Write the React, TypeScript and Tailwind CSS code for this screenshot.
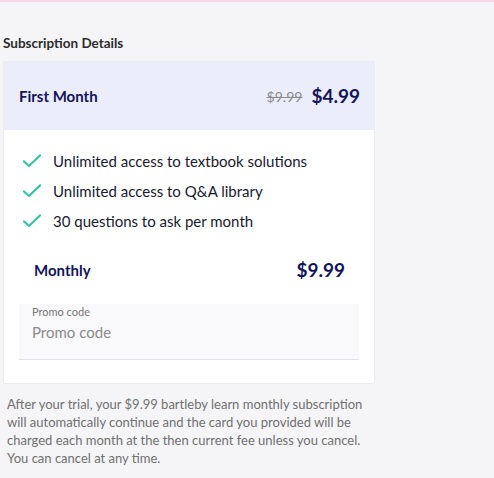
import React from 'react';

const features = [
  'Unlimited access to textbook solutions',
  'Unlimited access to Q&A library',
  '30 questions to ask per month',
];

const CheckIcon: React.FC = () => (
  <svg width="18" height="14" viewBox="0 0 18 14" fill="none" className="shrink-0">
    <path d="M1 7.5 L6 12 L17 1.5" stroke="#2ec4a0" strokeWidth="2" strokeLinecap="square" />
  </svg>
);

const App: React.FC = () => {
  return (
    <div className="min-h-screen w-full bg-[#f5f5f7] font-['Lato',sans-serif] text-[#1d1d4f]">
      <div className="h-[2px] bg-[#f7d6e6]" />
      <div className="w-[372px] ml-[3px] pt-[33px]">
        <h2 className="text-[13.5px] font-bold text-[#2c2c2c] leading-[16px]">Subscription Details</h2>

        <div className="mt-[10px] bg-white border border-[#ececf0] rounded-[2px]">
          <div className="h-[68px] bg-[#ebeefa] flex items-center justify-between pl-[15px] pr-[14px]">
            <span className="text-[15px] font-bold text-[#14145a]">First Month</span>
            <div className="flex items-center gap-[9px]">
              <span className="text-[14px] text-[#8a8a8a] line-through">$9.99</span>
              <span className="text-[19px] font-bold text-[#14145a]">$4.99</span>
            </div>
          </div>

          <ul className="pt-[22px] pl-[19px] flex flex-col gap-[12px]">
            {features.map(f => (
              <li key={f} className="flex items-center gap-[12px] h-[18px] text-[15px] text-[#1a1a2e]">
                <CheckIcon />
                <span>{f}</span>
              </li>
            ))}
          </ul>

          <div className="mt-[26px] flex items-center justify-between pl-[30px] pr-[29px]">
            <span className="text-[15px] font-bold text-[#14145a]">Monthly</span>
            <span className="text-[19px] font-bold text-[#14145a]">$9.99</span>
          </div>

          <div className="mt-[19px] mx-[15px] h-[56px] bg-[#f9f9fb] border-b border-[#e2e2e6] pl-[13px] pt-[1px]">
            <div className="text-[11px] text-[#777777] leading-[14px]">Promo code</div>
            <div className="text-[15px] text-[#8a8a8a] leading-[22px] mt-[2px]">Promo code</div>
          </div>
          <div className="h-[23px]" />
        </div>

        <p className="mt-[11px] px-[4px] text-[13px] leading-[18px] text-[#707070]">
          After your trial, your $9.99 bartleby learn monthly subscription will automatically continue and the card you provided will be charged each month at the then current fee unless you cancel. You can cancel at any time.
        </p>
      </div>
    </div>
  );
};

export default App;
